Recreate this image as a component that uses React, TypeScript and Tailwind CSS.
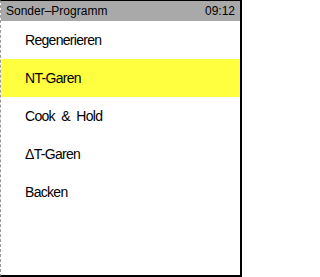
import React from "react";

const items = ["Regenerieren", "NT-Garen", "Cook\u00a0\u00a0&\u00a0\u00a0Hold", "\u0394T-Garen", "Backen"];

export default function App() {
  return (
    <div
      className="w-[242px] h-[277px] bg-white flex flex-col border-t border-t-black border-r-2 border-r-black border-b-2 border-b-black border-l border-l-[#9a9a9a] border-dashed overflow-hidden"
      style={{ fontFamily: '"Liberation Sans", Arial, sans-serif', borderTopStyle: "solid", borderRightStyle: "solid", borderBottomStyle: "solid" }}
    >
      <div className="h-[20px] bg-[#a9a9a9] flex items-center justify-between pl-[5px] pr-[5px] text-[12px] text-black leading-none">
        <span>Sonder–Programm</span>
        <span>09:12</span>
      </div>
      <div className="flex flex-col">
        {items.map((t, i) => (
          <div
            key={i}
            className={
              i === 1
                ? "h-[38px] flex items-center pl-[24px] bg-[#ffff3f] text-[14px] tracking-[-0.7px] text-black"
                : "h-[38px] flex items-center pl-[24px] text-[14px] tracking-[-0.7px] text-black"
            }
          >
            {t}
          </div>
        ))}
      </div>
    </div>
  );
}
